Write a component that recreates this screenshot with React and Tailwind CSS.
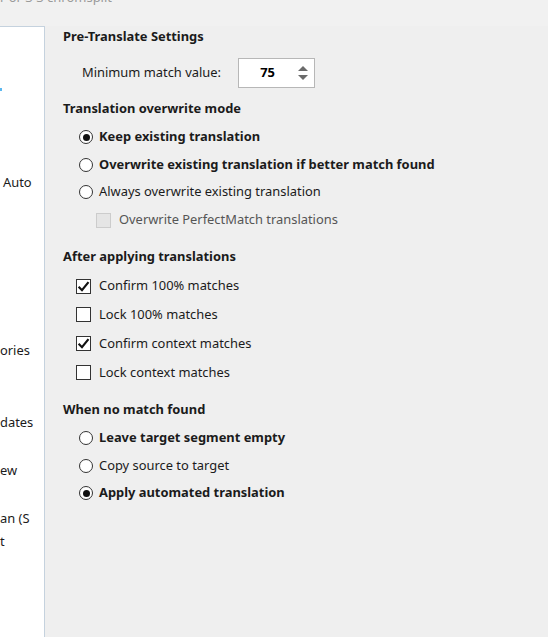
import React from "react";

const font = { fontFamily: '"Noto Sans", "Open Sans", sans-serif' };

function Radio({ checked, bold, children, className = "" }) {
  return (
    <div className={"flex items-center pl-[16px] " + className}>
      <span className="w-[14px] h-[14px] rounded-full border border-[#333] bg-white flex items-center justify-center">
        {checked && <span className="w-[7px] h-[7px] rounded-full bg-[#111]" />}
      </span>
      <span className={"ml-[6px] text-[12.9px] text-[#1b1b1b] " + (bold ? "font-bold" : "")}>
        {children}
      </span>
    </div>
  );
}

function Check({ checked, disabled, children, className = "" }) {
  return (
    <div className={"flex items-center " + className}>
      <span
        className={
          "w-[15px] h-[15px] border flex items-center justify-center " +
          (disabled ? "border-[#cccccc] bg-[#e5e5e5]" : "border-[#333] bg-white")
        }
      >
        {checked && (
          <svg width="13" height="13" viewBox="0 0 12 12">
            <path d="M1.5 6.3 L4.6 9.4 L10.6 2" fill="none" stroke="#111" strokeWidth="2" />
          </svg>
        )}
      </span>
      <span className={"ml-[8px] text-[12.9px] " + (disabled ? "text-[#555]" : "text-[#1b1b1b]")}>
        {children}
      </span>
    </div>
  );
}

function Heading({ children, className = "" }) {
  return (
    <div className={"h-[20px] flex items-center text-[12.9px] font-bold text-[#1b1b1b] " + className}>
      {children}
    </div>
  );
}

export default function App() {
  return (
    <div className="w-[548px] h-[637px] bg-[#efefef] flex flex-col overflow-hidden" style={font}>
      {/* clipped window caption */}
      <div className="h-[26px] bg-[#f1f1f1] overflow-hidden">
        <div className="-mt-[12px] text-[13px] text-[#9a9a9a] whitespace-nowrap">r or 3 3 chromsplit</div>
      </div>
      <div className="flex flex-1">
        {/* left tree, clipped */}
        <div className="w-[45px] bg-white border-t border-r border-[#c5d2de] overflow-hidden text-[12.9px] text-[#1b1b1b] whitespace-nowrap">
          <div className="mt-[55px] h-[14px] flex items-center">
            <span className="w-[2px] h-[3px] bg-[#5bb8f0]" />
          </div>
          <div className="mt-[77px] pl-[3px]">Auto</div>
          <div className="mt-[149px]">ories</div>
          <div className="mt-[52px]">dates</div>
          <div className="mt-[29px]">ew</div>
          <div className="mt-[29px]">an (S</div>
          <div className="mt-[3px]">t</div>
        </div>

        {/* settings */}
        <div className="flex-1 pl-[18px] pt-[1px]">
          <Heading>Pre-Translate Settings</Heading>
          <div className="mt-[11px] h-[30px] flex items-center pl-[19px]">
            <span className="text-[12.9px] text-[#1b1b1b] w-[156px]">Minimum match value:</span>
            <div className="w-[77px] h-[30px] bg-white border border-[#b7b7b7] flex items-center">
              <span className="w-[57px] text-center text-[12.9px] font-bold text-black">75</span>
              <svg width="12" height="16" viewBox="0 0 12 16" className="ml-[1px]">
                <path d="M1 6 L6 1 L11 6 Z" fill="#6b6b6b" />
                <path d="M1 10 L6 15 L11 10 Z" fill="#6b6b6b" />
              </svg>
            </div>
          </div>

          <Heading className="mt-[11px]">Translation overwrite mode</Heading>
          <Radio checked bold className="mt-[4px] h-[28px]">Keep existing translation</Radio>
          <Radio bold className="h-[27px]">Overwrite existing translation if better match found</Radio>
          <Radio className="h-[28px]">Always overwrite existing translation</Radio>
          <Check disabled className="h-[28px] pl-[33px]">Overwrite PerfectMatch translations</Check>

          <Heading className="mt-[13px]">After applying translations</Heading>
          <div className="mt-[5px] pl-[13px]">
            <Check checked className="h-[28px]">Confirm 100% matches</Check>
            <Check className="h-[29px]">Lock 100% matches</Check>
            <Check checked className="h-[29px]">Confirm context matches</Check>
            <Check className="h-[29px]">Lock context matches</Check>
          </div>

          <Heading className="mt-[13px]">When no match found</Heading>
          <Radio bold className="mt-[4px] h-[28px]">Leave target segment empty</Radio>
          <Radio className="h-[28px]">Copy source to target</Radio>
          <Radio checked bold className="h-[26px]">Apply automated translation</Radio>
        </div>
      </div>
    </div>
  );
}
